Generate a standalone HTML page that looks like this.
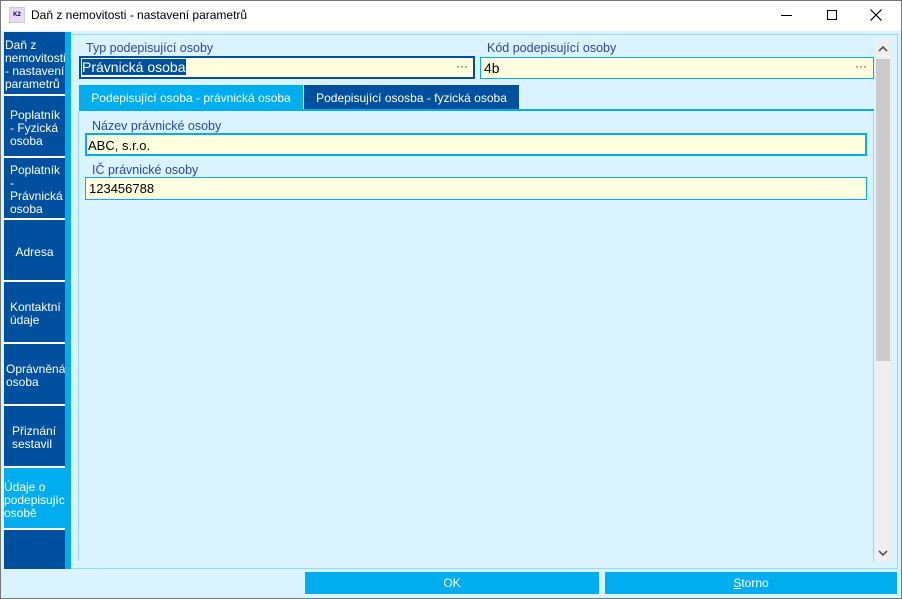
<!DOCTYPE html>
<html><head><meta charset="utf-8"><style>
*{box-sizing:border-box;margin:0;padding:0}
body{width:902px;height:599px;position:relative;overflow:hidden;background:#dbf3fe;font-family:"Segoe UI","Liberation Sans","DejaVu Sans",sans-serif;font-size:12px}
.a{position:absolute}
.win{left:0;top:0;width:902px;height:599px;border:1px solid #777}
.title{left:1px;top:1px;width:900px;height:30px;background:#fff}
.side{left:4px;top:32px;width:61px;height:537px;background:#0050a0}
.strip{left:65px;top:32px;width:6px;height:537px;background:#00aeef}
.it{position:absolute;left:4px;width:61px;color:#fff;font-size:12px;line-height:13px;display:flex;align-items:center;border-bottom:2px solid #fff;padding-top:4px;padding-right:5px;overflow:hidden;white-space:normal}
.lbl{color:#2a48a8;font-size:12.5px}
.inp{background:#ffffe0;font-size:13px;color:#000;padding-left:3px;line-height:20px}
.btn{background:#00aeef;color:#fff;text-align:center;font-size:12px;line-height:22px}
</style></head><body>
<div class="a win"></div>
<div class="a title"></div>
<div class="a" style="left:9px;top:7px;width:16px;height:16px;background:linear-gradient(135deg,#f0d0f0,#e0e0ff);border:1px solid #ccc;font-size:6px;font-weight:bold;color:#003;line-height:14px;text-align:center">K2</div>
<div class="a" style="left:31px;top:8px;font-size:12px;color:#000">Daň z nemovitosti - nastavení parametrů</div>
<div class="a" style="left:781px;top:15px;width:11px;height:1px;background:#000"></div>
<div class="a" style="left:827px;top:10px;width:10px;height:10px;border:1px solid #000"></div>
<svg class="a" style="left:870px;top:9px" width="12" height="12"><path d="M0.5 0.5L11.5 11.5M11.5 0.5L0.5 11.5" stroke="#000" stroke-width="1.2"/></svg>

<div class="a" style="left:71px;top:34px;width:827px;height:535px;border:1px solid #8fdcfc;border-left:none"></div>
<div class="a side"></div><div class="a strip"></div>
<div class="it" style="top:32px;height:64px;padding-left:1px;padding-right:0">Daň z nemovitosti - nastavení parametrů</div>
<div class="it" style="top:96px;height:62px;padding-left:6px">Poplatník - Fyzická osoba</div>
<div class="it" style="top:158px;height:62px;padding-left:6px">Poplatník - Právnická osoba</div>
<div class="it" style="top:220px;height:62px;justify-content:center;padding-right:0">Adresa</div>
<div class="it" style="top:282px;height:62px;padding-left:6px">Kontaktní údaje</div>
<div class="it" style="top:344px;height:62px;padding-left:2px;padding-right:0">Oprávněná osoba</div>
<div class="it" style="top:406px;height:62px;padding-left:8px">Přiznání sestavil</div>
<div class="it" style="top:468px;height:62px;background:#00aeef;padding-left:0;padding-right:0">Údaje o podepisující osobě</div>

<div class="a lbl" style="left:86px;top:41px">Typ podepisující osoby</div>
<div class="a lbl" style="left:487px;top:41px">Kód podepisující osoby</div>
<div class="a inp" style="left:79px;top:56px;width:396px;height:23px;border:2px solid #0050a0;padding-left:1px;line-height:19px"><span style="background:#0050a0;color:#fff;font-size:14px">Právnická osoba</span></div>
<div class="a" style="left:456px;top:59px;color:#333">···</div>
<div class="a inp" style="left:480px;top:57px;width:394px;height:22px;border:1px solid #00aeef;font-size:14px">4b</div>
<div class="a" style="left:855px;top:59px;color:#333">···</div>

<div class="a" style="left:79px;top:85px;width:224px;height:26px;background:#00aeef;color:#fff;text-align:center;line-height:26px">Podepisující osoba - právnická osoba</div>
<div class="a" style="left:304px;top:85px;width:215px;height:25px;background:#0050a0;color:#fff;text-align:center;line-height:26px">Podepisující ososba - fyzická osoba</div>
<div class="a" style="left:79px;top:109px;width:795px;height:2px;background:#00aeef"></div>
<div class="a" style="left:78px;top:111px;width:1px;height:450px;background:#8fdcfc"></div>
<div class="a" style="left:873px;top:111px;width:1px;height:451px;background:#8fdcfc"></div>

<div class="a lbl" style="left:92px;top:119px">Název právnické osoby</div>
<div class="a inp" style="left:85px;top:133px;width:782px;height:23px;border:2px solid #00aeef;padding-left:1px;line-height:21px">ABC, s.r.o.</div>
<div class="a lbl" style="left:92px;top:163px">IČ právnické osoby</div>
<div class="a inp" style="left:85px;top:177px;width:782px;height:23px;border:1px solid #00aeef;line-height:22px">123456788</div>

<div class="a" style="left:875px;top:40px;width:16px;height:522px;background:#efefef"></div>
<div class="a" style="left:876px;top:59px;width:14px;height:302px;background:#cbcbcb"></div>
<svg class="a" style="left:878px;top:45px" width="10" height="8"><path d="M1 6L5 2L9 6" stroke="#555" stroke-width="1.6" fill="none"/></svg>
<svg class="a" style="left:878px;top:549px" width="10" height="8"><path d="M1 2L5 6L9 2" stroke="#555" stroke-width="1.6" fill="none"/></svg>

<div class="a btn" style="left:305px;top:572px;width:294px;height:22px">OK</div>
<div class="a btn" style="left:605px;top:572px;width:292px;height:22px"><u>S</u>torno</div>
</body></html>
